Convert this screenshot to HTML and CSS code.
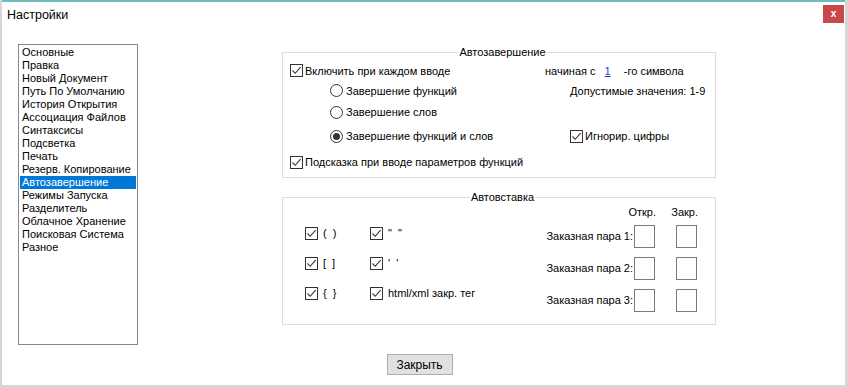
FILE: index.html
```html
<!DOCTYPE html>
<html lang="ru">
<head>
  <meta charset="UTF-8" />
  <title>Настройки</title>
  <link rel="stylesheet" href="styles.css">
</head>
<body>
  <div class="window">
    <div class="titlebar">
      <span class="title">Настройки</span>
      <span class="close-x">x</span>
    </div>
    <div class="main">
      <ul class="listbox">
        <li>Основные</li>
        <li>Правка</li>
        <li>Новый Документ</li>
        <li>Путь По Умолчанию</li>
        <li>История Открытия</li>
        <li>Ассоциация Файлов</li>
        <li>Синтаксисы</li>
        <li>Подсветка</li>
        <li>Печать</li>
        <li>Резерв. Копирование</li>
        <li class="selected">Автозавершение</li>
        <li>Режимы Запуска</li>
        <li>Разделитель</li>
        <li>Облачное Хранение</li>
        <li>Поисковая Система</li>
        <li>Разное</li>
      </ul>
      <div class="groups">
        <fieldset class="group group-complete">
          <legend>Автозавершение</legend>
          <div class="row r1">
            <label class="opt left"><span class="cb"><svg viewBox="0 0 11 11"><path d="M1.5 5.5 L4.2 8.3 L9.6 2.2"/></svg></span>Включить при каждом вводе</label>
            <span class="start">начиная с <span class="num">1</span> -го символа</span>
          </div>
          <div class="row r2">
            <label class="opt left indent"><span class="rb"></span>Завершение функций</label>
            <span class="shift">Допустимые значения: 1-9</span>
          </div>
          <div class="row r3">
            <label class="opt left indent"><span class="rb"></span>Завершение слов</label>
          </div>
          <div class="row r4">
            <label class="opt left indent"><span class="rb on"></span>Завершение функций и слов</label>
            <label class="opt shift"><span class="cb"><svg viewBox="0 0 11 11"><path d="M1.5 5.5 L4.2 8.3 L9.6 2.2"/></svg></span>Игнорир. цифры</label>
          </div>
          <div class="row r5">
            <label class="opt"><span class="cb"><svg viewBox="0 0 11 11"><path d="M1.5 5.5 L4.2 8.3 L9.6 2.2"/></svg></span>Подсказка при вводе параметров функций</label>
          </div>
        </fieldset>

        <fieldset class="group group-insert">
          <legend>Автовставка</legend>
          <div class="insert-body">
            <div class="pairs">
              <label class="opt"><span class="cb"><svg viewBox="0 0 11 11"><path d="M1.5 5.5 L4.2 8.3 L9.6 2.2"/></svg></span><span class="pt br">( )</span></label>
              <label class="opt"><span class="cb"><svg viewBox="0 0 11 11"><path d="M1.5 5.5 L4.2 8.3 L9.6 2.2"/></svg></span><span class="pt br">" "</span></label>
              <label class="opt"><span class="cb"><svg viewBox="0 0 11 11"><path d="M1.5 5.5 L4.2 8.3 L9.6 2.2"/></svg></span><span class="pt br">[ ]</span></label>
              <label class="opt"><span class="cb"><svg viewBox="0 0 11 11"><path d="M1.5 5.5 L4.2 8.3 L9.6 2.2"/></svg></span><span class="pt br">' '</span></label>
              <label class="opt"><span class="cb"><svg viewBox="0 0 11 11"><path d="M1.5 5.5 L4.2 8.3 L9.6 2.2"/></svg></span><span class="pt br">{ }</span></label>
              <label class="opt"><span class="cb"><svg viewBox="0 0 11 11"><path d="M1.5 5.5 L4.2 8.3 L9.6 2.2"/></svg></span><span class="pt">html/xml закр. тег</span></label>
            </div>
            <div class="custom">
              <span></span>
              <span class="head head-open">Откр.</span>
              <span class="head head-close">Закр.</span>
              <span class="pair-label">Заказная пара 1:</span>
              <span class="box"></span>
              <span class="box box-close"></span>
              <span class="pair-label">Заказная пара 2:</span>
              <span class="box"></span>
              <span class="box box-close"></span>
              <span class="pair-label">Заказная пара 3:</span>
              <span class="box"></span>
              <span class="box box-close"></span>
            </div>
          </div>
        </fieldset>
      </div>
    </div>
    <div class="footer">
      <button class="btn">Закрыть</button>
    </div>
  </div>
</body>
</html>
```

FILE: styles.css
```css
* { box-sizing: border-box; }
body {
  margin: 0;
  width: 848px;
  height: 388px;
  background: #d6d6d6;
  font-family: "Liberation Sans", Arial, sans-serif;
  font-size: 11px;
  color: #000;
  overflow: hidden;
}
.window {
  margin-left: 2px;
  width: 843px;
  height: 385px;
  background: #fff;
  border-top: 2px solid #6dbdbd;
}
.titlebar {
  height: 28px;
  display: flex;
  justify-content: space-between;
  align-items: flex-start;
}
.title {
  font-size: 12.5px;
  margin: 6px 0 0 5px;
}
.close-x {
  width: 21px;
  height: 18px;
  margin: 3px 1px 0 0;
  background: #c8494b;
  color: #fff;
  font-weight: bold;
  font-size: 10px;
  line-height: 17px;
  text-align: center;
}
.main {
  display: flex;
  align-items: flex-start;
  margin-top: 14px;
}
.listbox {
  list-style: none;
  margin: 0 0 0 16px;
  padding: 1px 1px;
  width: 120px;
  height: 301px;
  border: 1px solid #828790;
}
.listbox li {
  height: 13px;
  line-height: 13px;
  padding-left: 2px;
  white-space: nowrap;
}
.listbox li.selected {
  background: #0078d7;
  color: #fff;
}
.groups {
  margin-left: 144px;
  width: 434px;
}
.group {
  margin: 0;
  padding: 0 0 0 7px;
  border: 1px solid #dcdcdc;
  min-width: 0;
}
.group legend {
  margin: 0 auto;
  padding: 0 1px;
  line-height: 14px;
  height: 14px;
}
.group-complete { margin-top: 1px; height: 133px; }
.row {
  display: flex;
  align-items: center;
}
.r1 { height: 21px; margin-top: 1px; }
.r2 { height: 19px; }
.r3 { height: 24px; }
.r4 { height: 24px; }
.r5 { height: 28px; }
.left { width: 255px; }
.indent { padding-left: 40px; }
.shift { margin-left: 25px; }
.opt {
  display: flex;
  align-items: center;
  white-space: nowrap;
}
.cb {
  width: 13px;
  height: 13px;
  border: 1px solid #333;
  background: #fff;
  margin-right: 2px;
  display: inline-flex;
}
.cb svg {
  width: 11px;
  height: 11px;
  fill: none;
  stroke: #333;
  stroke-width: 1.1;
}
.rb {
  width: 13px;
  height: 13px;
  border: 1px solid #333;
  border-radius: 50%;
  margin-right: 3px;
  display: inline-flex;
  align-items: center;
  justify-content: center;
}
.rb.on::after {
  content: "";
  width: 7px;
  height: 7px;
  border-radius: 50%;
  background: #333;
}
.num {
  color: #1b3fd6;
  text-decoration: underline;
  margin: 0 10px 0 6px;
}
.group-insert {
  margin-top: 12px;
  height: 135px;
}
.insert-body {
  display: flex;
  justify-content: space-between;
}
.pairs {
  display: grid;
  grid-template-columns: 65px auto;
  grid-auto-rows: 30px;
  align-items: center;
  margin: 14px 0 0 15px;
}
.pt { margin-left: 3px; }
.pt.br { word-spacing: 3px; }
.custom {
  display: grid;
  grid-template-columns: auto 21px 42px;
  grid-template-rows: 21px 32px 32px 23px;
  align-items: start;
  margin-right: 18px;
}
.head {
  white-space: nowrap;
  line-height: 16px;
}
.head-open { justify-self: end; margin-right: -1px; }
.head-close { justify-self: end; margin-right: -1px; }
.box {
  width: 21px;
  height: 23px;
  border: 1px solid #7a7a7a;
}
.box-close { justify-self: end; }
.pair-label {
  line-height: 23px;
  margin-right: 1px;
  white-space: nowrap;
}
.footer {
  display: flex;
  justify-content: center;
  padding-right: 8px;
  margin-top: 9px;
}
.btn {
  width: 66px;
  height: 21px;
  font-family: "Liberation Sans", Arial, sans-serif;
  font-size: 12px;
  background: #e1e1e1;
  border: 1px solid #adadad;
  border-radius: 0;
  padding: 0;
}
```
